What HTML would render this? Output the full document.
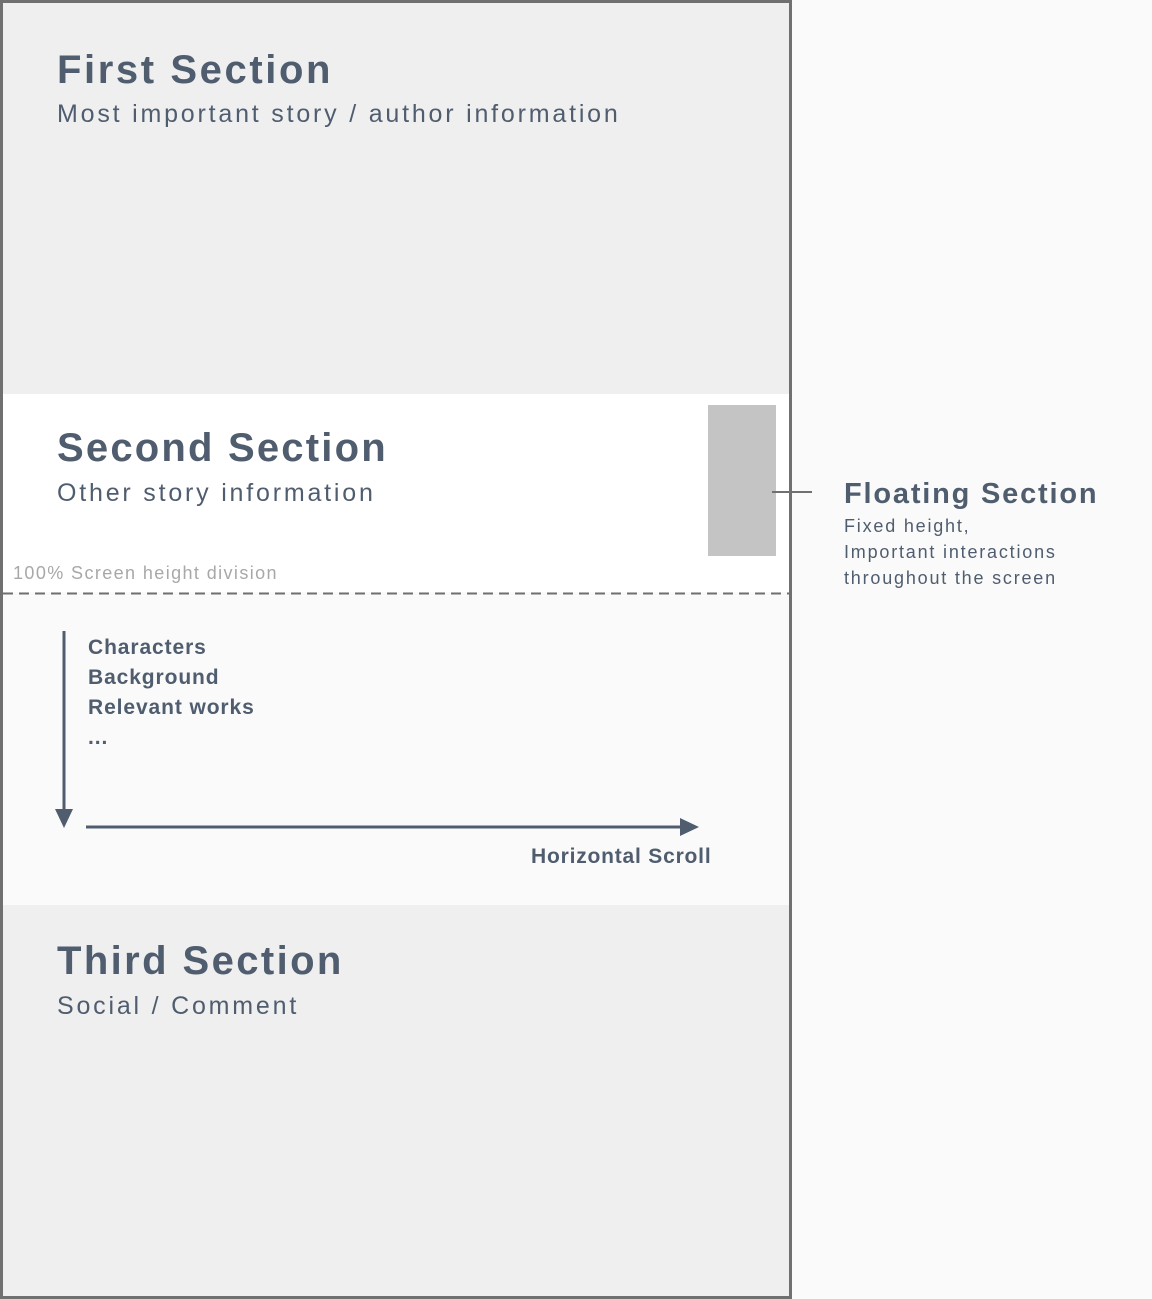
<!DOCTYPE html>
<html><head><style>
body{margin:0;width:1152px;height:1299px;background:#fafafa;position:relative;overflow:hidden;font-family:"Liberation Sans",sans-serif;color:#4f5d6f}
.a{position:absolute}
.h{font-weight:bold;font-size:40px;letter-spacing:2.4px;line-height:1}
.s{font-size:25px;letter-spacing:2.8px;line-height:1}
.b{font-weight:bold;font-size:21px;letter-spacing:.9px}
</style></head><body>
<div class="a" style="left:0;top:0;width:786px;height:1293px;border:3px solid #707070;background:#fafafa"></div>
<div class="a" style="left:3px;top:3px;width:786px;height:391px;background:#efefef"></div>
<div class="a" style="left:3px;top:394px;width:786px;height:198px;background:#fff"></div>
<div class="a" style="left:3px;top:905px;width:786px;height:391px;background:#efefef"></div>
<svg class="a" style="left:3px;top:592px" width="786" height="3"><line x1="0" y1="1.5" x2="786" y2="1.5" stroke="#707070" stroke-width="2" stroke-dasharray="10,6"/></svg>
<div class="a" style="left:708px;top:405px;width:68px;height:151px;background:#c4c4c4"></div>
<div class="a" style="left:772px;top:491px;width:40px;height:2px;background:#707070"></div>

<div class="a h" style="left:57px;top:50px;letter-spacing:2.6px">First Section</div>
<div class="a s" style="left:57px;top:102px">Most important story / author information</div>
<div class="a h" style="left:57px;top:428px;letter-spacing:2.2px">Second Section</div>
<div class="a s" style="left:57px;top:481px">Other story information</div>
<div class="a" style="left:13px;top:563px;font-size:18px;color:#a8a8a8;letter-spacing:1.4px">100% Screen height division</div>
<div class="a h" style="left:57px;top:941px">Third Section</div>
<div class="a s" style="left:57px;top:994px">Social / Comment</div>

<div class="a b" style="left:88px;top:633px;line-height:30px">Characters<br>Background<br>Relevant works<br>...</div>
<div class="a b" style="left:531px;top:845px;letter-spacing:.8px">Horizontal Scroll</div>
<svg class="a" style="left:0;top:0" width="792" height="900">
<line x1="64" y1="631" x2="64" y2="812" stroke="#4f5d6f" stroke-width="3"/>
<polygon points="55,809 73,809 64,828" fill="#4f5d6f"/>
<line x1="86" y1="827" x2="682" y2="827" stroke="#4f5d6f" stroke-width="3"/>
<polygon points="680,818 680,836 699,827" fill="#4f5d6f"/>
</svg>

<div class="a" style="left:844px;top:478px;font-weight:bold;font-size:29px;letter-spacing:1.8px">Floating Section</div>
<div class="a" style="left:844px;top:513px;font-size:18px;line-height:26px;letter-spacing:1.8px">Fixed height,<br>Important interactions<br>throughout the screen</div>
</body></html>
